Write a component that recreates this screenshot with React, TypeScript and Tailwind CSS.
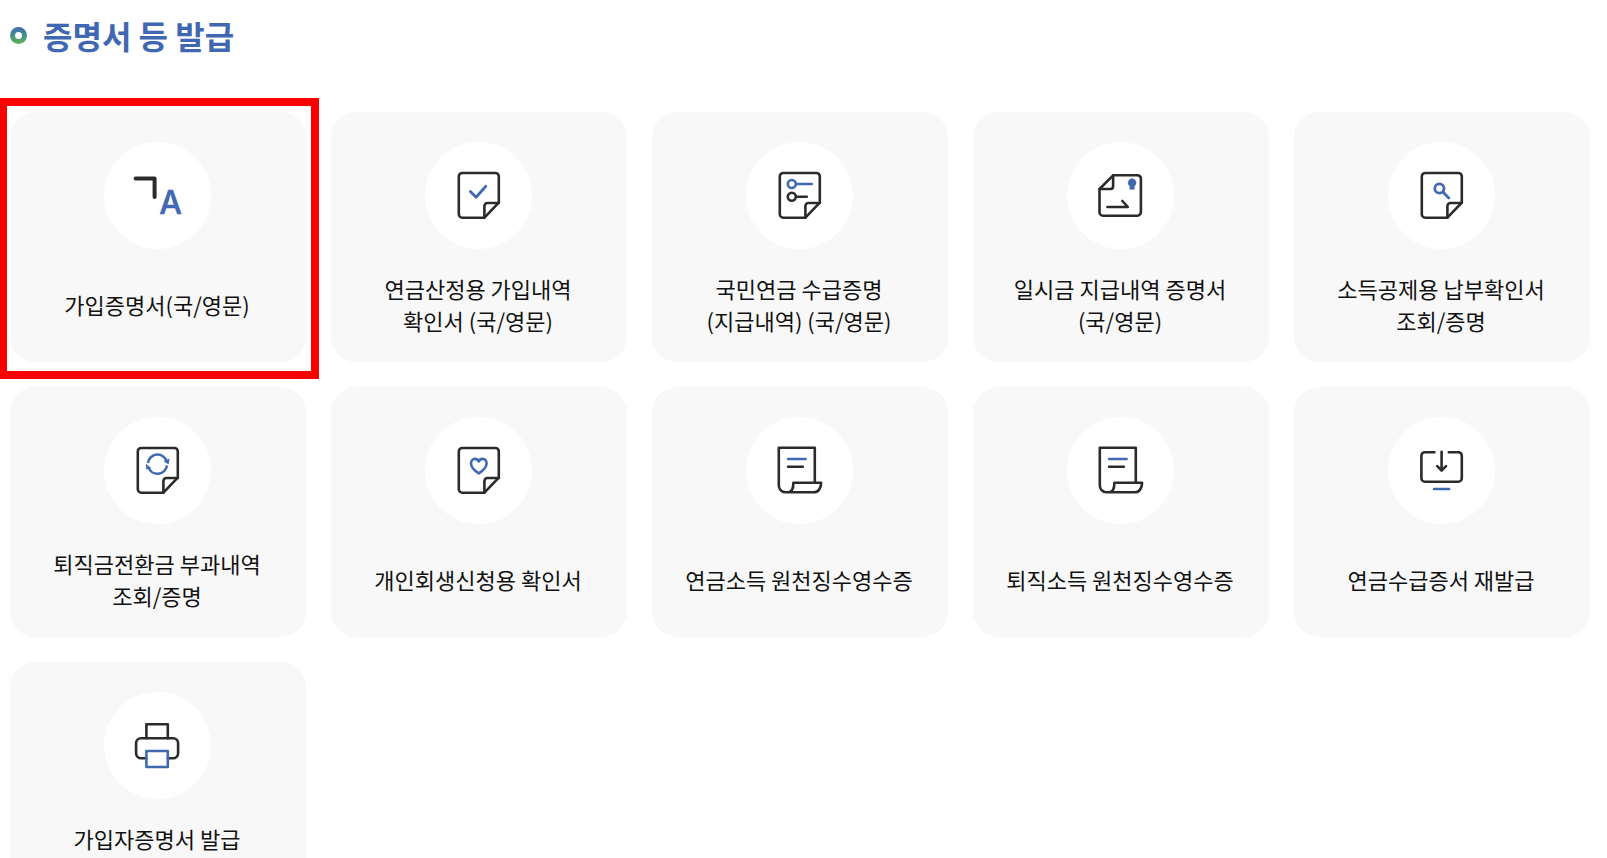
import type { FC, ReactNode } from 'react';

type Certificate = {
	lines: string[];
	icon: ReactNode;
	highlighted?: boolean;
};

const INK = '#2b2b2b';
const BLUE = '#4169b1';

const Sheet: FC<{ children: ReactNode }> = ({ children }) => (
	<>
		<path d="M73.2 60.7V34.5a3.5 3.5 0 0 0-3.5-3.5h-33a3.5 3.5 0 0 0-3.5 3.5v37.7a3.5 3.5 0 0 0 3.5 3.5h22.1z" />
		<path d="M58.8 75.7V64a3 3 0 0 1 3-3h11.4" />
		{children}
	</>
);

const LanguageIcon = () => (
	<>
		<polyline points="31,36.5 50,36.5 50,55" strokeWidth="4" />
		<text
			x="66"
			y="72"
			textAnchor="middle"
			fontFamily="Inter, sans-serif"
			fontSize="32"
			fontWeight="500"
			fill={BLUE}
			stroke={BLUE}
			strokeWidth="0.6"
		>
			A
		</text>
	</>
);

const CheckIcon = () => (
	<Sheet>
		<path d="m44.8 49.5 5.7 5.7 9.7-10.9" stroke={BLUE} strokeWidth="2.8" />
	</Sheet>
);

const ListIcon = () => (
	<Sheet>
		<circle cx="45.2" cy="42" r="4" stroke={BLUE} />
		<path d="M49.5 42h15.7" stroke={BLUE} />
		<circle cx="45.2" cy="54.7" r="4" />
		<path d="M49.5 54.7h10.7" />
	</Sheet>
);

const PaymentIcon = () => (
	<>
		<path d="M45.8 33.2h24a3.5 3.5 0 0 1 3.5 3.5v33.5a3.5 3.5 0 0 1-3.5 3.5H35.4a3.5 3.5 0 0 1-3.5-3.5V47z" />
		<path d="M45.5 33.4v11.2a2.4 2.4 0 0 1-2.4 2.4H32" />
		<path d="M39.8 65h20.4l-5.4-6" />
		<path d="M64.5 36.8a4 4 0 0 0-2.2 7.3v3.2h4.4v-3.2a4 4 0 0 0-2.2-7.3z" fill={BLUE} stroke={BLUE} strokeWidth="0.6" />
	</>
);

const SearchIcon = () => (
	<Sheet>
		<g stroke={BLUE} strokeWidth="2.8">
			<circle cx="50.8" cy="46.5" r="4.6" />
			<path d="m54.3 50 5.9 5.9" />
		</g>
	</Sheet>
);

const RefreshIcon = () => (
	<Sheet>
		<g stroke={BLUE} strokeLinecap="butt">
			<path d="M43.4 46a9.5 9.5 0 0 1 18.6-1.5" />
			<path d="M62.3 48.5a9.5 9.5 0 0 1-18.4 1.8" />
		</g>
		<path d="m59 44.2 6-2.8-1 6.2zM41.4 46.7l5.2 4.2-5 1.6z" fill={BLUE} stroke="none" />
	</Sheet>
);

const HeartIcon = () => (
	<Sheet>
		<path
			d="M53.2 56.4c-4-2.7-7.8-6-7.8-9.9 0-2.7 1.7-4.6 4-4.6 1.7 0 3.1.9 3.8 2.6.7-1.7 2.1-2.6 3.8-2.6 2.3 0 4 1.9 4 4.6 0 3.9-3.8 7.2-7.8 9.9z"
			stroke={BLUE}
		/>
	</Sheet>
);

const ReceiptIcon = () => (
	<>
		<path d="M68.2 65.7v-35h-36v37.5c0 3.9 2.6 7.1 6.5 7.1h28.5c4.3 0 7.3-4 7.3-9.6H46.8c0 5.6-1.8 9.6-5.6 9.6" />
		<path d="M41.5 42h17.5" stroke={BLUE} />
		<path d="M41.5 49.7h14.7" />
	</>
);

const DownloadIcon = () => (
	<>
		<path d="M45.8 35.2h-9.5a3.5 3.5 0 0 0-3.5 3.5v22.5a3.5 3.5 0 0 0 3.5 3.5h33.4a3.5 3.5 0 0 0 3.5-3.5V38.7a3.5 3.5 0 0 0-3.5-3.5h-9.5" />
		<path d="M53 34.7v18.5M48.6 49.2l4.4 4.4 4.4-4.4" />
		<path d="M45.5 72h15" stroke={BLUE} />
	</>
);

const PrinterIcon = () => (
	<>
		<path d="M41.8 46.3V32.2h21.4v14.1" />
		<path d="M41.8 66.3h-5.3a5 5 0 0 1-5-5v-10a5 5 0 0 1 5-5h32a5 5 0 0 1 5 5v10a5 5 0 0 1-5 5h-5.3" />
		<rect x="41.8" y="59" width="21.4" height="16" stroke={BLUE} />
	</>
);

const certificates: Certificate[] = [
	{ lines: ['가입증명서(국/영문)'], icon: <LanguageIcon />, highlighted: true },
	{ lines: ['연금산정용 가입내역', '확인서 (국/영문)'], icon: <CheckIcon /> },
	{ lines: ['국민연금 수급증명', '(지급내역) (국/영문)'], icon: <ListIcon /> },
	{ lines: ['일시금 지급내역 증명서', '(국/영문)'], icon: <PaymentIcon /> },
	{ lines: ['소득공제용 납부확인서', '조회/증명'], icon: <SearchIcon /> },
	{ lines: ['퇴직금전환금 부과내역', '조회/증명'], icon: <RefreshIcon /> },
	{ lines: ['개인회생신청용 확인서'], icon: <HeartIcon /> },
	{ lines: ['연금소득 원천징수영수증'], icon: <ReceiptIcon /> },
	{ lines: ['퇴직소득 원천징수영수증'], icon: <ReceiptIcon /> },
	{ lines: ['연금수급증서 재발급'], icon: <DownloadIcon /> },
	{ lines: ['가입자증명서 발급', ''], icon: <PrinterIcon /> },
];

const CertificateCard: FC<Certificate> = ({ lines, icon, highlighted }) => (
	<li className="relative">
		<a href="#" className="flex h-[250px] flex-col items-center rounded-[25px] bg-[#f8f8f8] pt-[30px] pr-0.5">
			<span className="size-[107px] shrink-0 rounded-full bg-white">
				<svg
					viewBox="-0.6 0 107 107"
					className="size-full"
					fill="none"
					stroke={INK}
					strokeWidth="2.6"
					strokeLinecap="round"
					strokeLinejoin="round"
					aria-hidden="true"
				>
					{icon}
				</svg>
			</span>
			<span className="mt-[23px] flex h-16 flex-col justify-center text-center text-[22px] leading-8 whitespace-nowrap text-[#111]">
				{lines.map((line, i) => (
					<span key={i} className="block h-8">
						{line}
					</span>
				))}
			</span>
		</a>
		{highlighted && (
			<div className="pointer-events-none absolute -top-[14px] -right-[13px] -bottom-[17px] -left-[11px] border-8 border-[#fb0000]" />
		)}
	</li>
);

export default function App() {
	return (
		<main className="h-screen overflow-hidden bg-white pr-[17px] pl-[10px] font-['Noto_Sans_CJK_KR',sans-serif]">
			<h2 className="flex h-[112px] items-start gap-4 pt-[11px] text-[32px] leading-[48px] font-bold text-[#4068b2]">
				<span className="mt-4 flex size-[17px] items-center justify-center rounded-full bg-linear-to-b from-[#3f69b2] to-[#5db346]">
					<span className="size-[7px] rounded-full bg-white" />
				</span>
				증명서 등 발급
			</h2>
			<ul className="grid grid-cols-5 gap-[25px]">
				{certificates.map((item) => (
					<CertificateCard key={item.lines[0]} {...item} />
				))}
			</ul>
		</main>
	);
}
